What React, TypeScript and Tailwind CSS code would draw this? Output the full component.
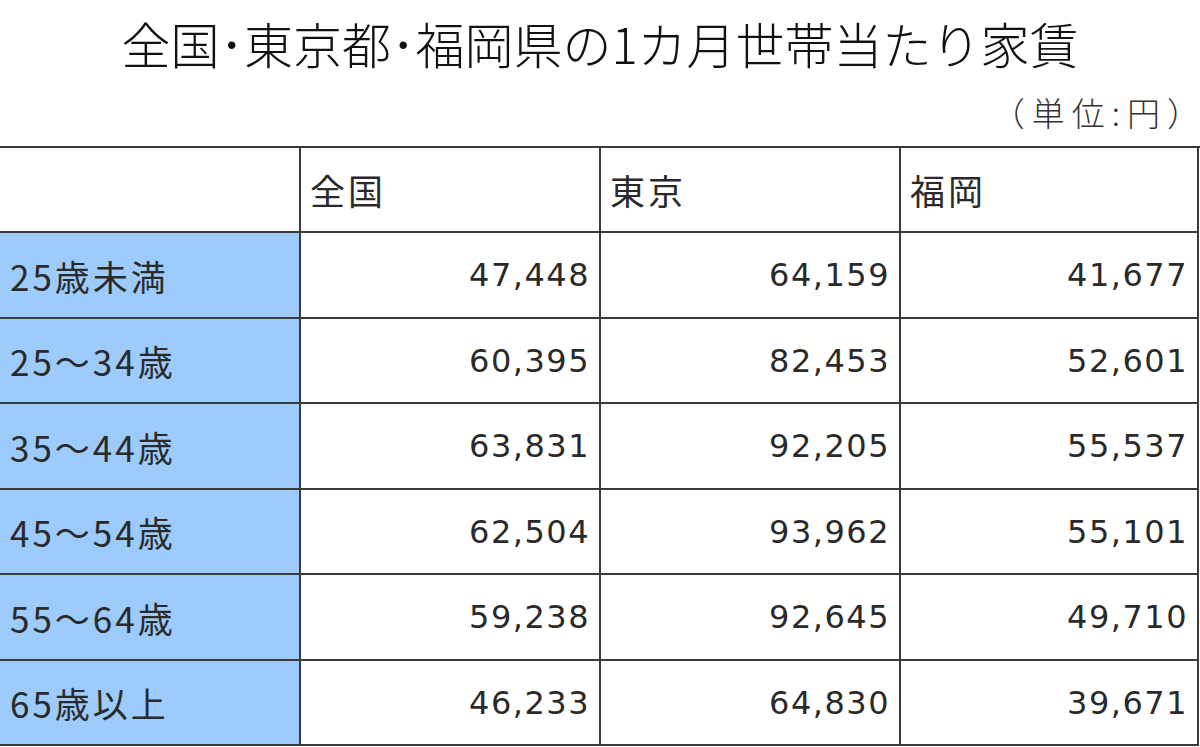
import React from "react";

const rows: [string, string, string, string][] = [
  ["25歳未満", "47,448", "64,159", "41,677"],
  ["25～34歳", "60,395", "82,453", "52,601"],
  ["35～44歳", "63,831", "92,205", "55,537"],
  ["45～54歳", "62,504", "93,962", "55,101"],
  ["55～64歳", "59,238", "92,645", "49,710"],
  ["65歳以上", "46,233", "64,830", "39,671"],
];

const heights = ["h-[86px]", "h-[85px]", "h-[86px]", "h-[85px]", "h-[86px]", "h-[85px]"];

const jp = "font-['Noto_Sans_CJK_JP','Noto_Sans',sans-serif]";
const num = "font-['DejaVu_Sans',sans-serif]";

export default function App() {
  return (
    <div className="w-[1200px] h-[747px] bg-white overflow-hidden text-[#2a2a2a]">
      <div className={`h-[80px] flex items-center justify-center ${jp} font-light text-[49px] leading-none text-[#111] pt-[4px]`}>
        全国･東京都･福岡県の1カ月世帯当たり家賃
      </div>
      <div className={`h-[66px] flex items-center justify-end ${jp} font-light text-[33px] leading-none text-[#333] pb-[2px]`}>
        <span className="tracking-[7px]">（単位:円</span>
        <span>）</span>
      </div>
      <div className="border-t-2 border-[#3a3a3a] grid grid-cols-[301px_300px_300px_298px]">
        <div className="h-[85px] border-r-2 border-b-2 border-[#3a3a3a]" />
        {["全国", "東京", "福岡"].map((h) => (
          <div
            key={h}
            className={`h-[85px] border-r-2 border-b-2 border-[#3a3a3a] flex items-center pl-[9px] ${jp} text-[35px] tracking-[3px] leading-none`}
          >
            {h}
          </div>
        ))}
        {rows.map((r, i) => (
          <React.Fragment key={r[0]}>
            <div
              className={`${heights[i]} bg-[#9dcbfb] border-r-2 border-b-2 border-[#3a3a3a] flex items-center pl-[10px] ${jp} text-[35px] tracking-[3px] leading-none`}
            >
              {r[0]}
            </div>
            {r.slice(1).map((v, j) => (
              <div
                key={j}
                className={`${heights[i]} border-r-2 border-b-2 border-[#3a3a3a] flex items-center justify-end pr-[9px] ${num} text-[32px] tracking-[1.5px] leading-none`}
              >
                {v}
              </div>
            ))}
          </React.Fragment>
        ))}
      </div>
    </div>
  );
}
